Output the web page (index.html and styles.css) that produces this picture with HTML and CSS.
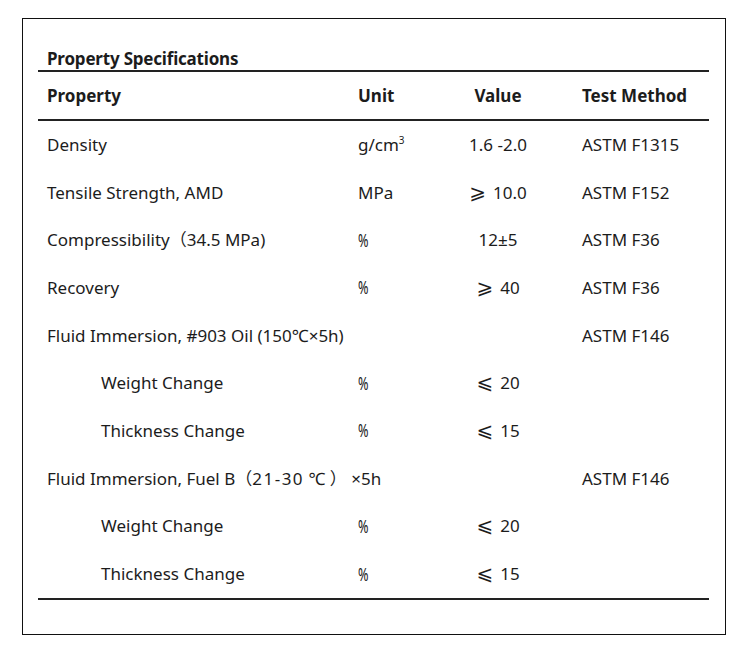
FILE: index.html
```html
<!DOCTYPE html>
<html lang="en">
<head>
<meta charset="utf-8">
<title>Property Specifications</title>
<link rel="stylesheet" href="styles.css">
</head>
<body>
<div class="frame">
  <div class="sheet">
    <h2 class="title">Property Specifications</h2>
    <div class="table">
      <div class="row head">
        <div class="c prop">Property</div>
        <div class="c unit">Unit</div>
        <div class="c val">Value</div>
        <div class="c meth">Test Method</div>
      </div>
      <div class="body">
        <div class="row">
          <div class="c prop">Density</div>
          <div class="c unit">g/cm<sup>3</sup></div>
          <div class="c val">1.6 -2.0</div>
          <div class="c meth">ASTM F1315</div>
        </div>
        <div class="row">
          <div class="c prop">Tensile Strength, AMD</div>
          <div class="c unit">MPa</div>
          <div class="c val"><span class="op">⩾</span>10.0</div>
          <div class="c meth">ASTM F152</div>
        </div>
        <div class="row">
          <div class="c prop">Compressibility（34.5 MPa)</div>
          <div class="c unit"><span class="pct">%</span></div>
          <div class="c val">12±5</div>
          <div class="c meth">ASTM F36</div>
        </div>
        <div class="row">
          <div class="c prop">Recovery</div>
          <div class="c unit"><span class="pct">%</span></div>
          <div class="c val"><span class="op">⩾</span>40</div>
          <div class="c meth">ASTM F36</div>
        </div>
        <div class="row">
          <div class="c prop wide">Fluid Immersion, #903 Oil (150℃×5h)</div>
          <div class="c val"></div>
          <div class="c meth">ASTM F146</div>
        </div>
        <div class="row">
          <div class="c prop sub">Weight Change</div>
          <div class="c unit"><span class="pct">%</span></div>
          <div class="c val"><span class="op">⩽</span>20</div>
          <div class="c meth"></div>
        </div>
        <div class="row">
          <div class="c prop sub">Thickness Change</div>
          <div class="c unit"><span class="pct">%</span></div>
          <div class="c val"><span class="op">⩽</span>15</div>
          <div class="c meth"></div>
        </div>
        <div class="row">
          <div class="c prop wide">Fluid Immersion, Fuel B（<span class="range">21-30</span> ℃ ） ×5h</div>
          <div class="c val"></div>
          <div class="c meth">ASTM F146</div>
        </div>
        <div class="row">
          <div class="c prop sub">Weight Change</div>
          <div class="c unit"><span class="pct">%</span></div>
          <div class="c val"><span class="op">⩽</span>20</div>
          <div class="c meth"></div>
        </div>
        <div class="row">
          <div class="c prop sub">Thickness Change</div>
          <div class="c unit"><span class="pct">%</span></div>
          <div class="c val"><span class="op">⩽</span>15</div>
          <div class="c meth"></div>
        </div>
      </div>
    </div>
  </div>
</div>
</body>
</html>
```

FILE: styles.css
```css
html, body {
  margin: 0;
  padding: 0;
  background: #ffffff;
}

body {
  font-family: "Noto Sans", "Noto Sans CJK SC", sans-serif;
  color: #1c1c1c;
  font-size: 17px;
}

.frame {
  box-sizing: border-box;
  margin: 18px 0 0 22px;
  width: 704px;
  height: 617px;
  border: 1px solid #111111;
}

.sheet {
  margin: 0 16px 0 15px;
  padding-top: 28px;
}

.title {
  margin: 0;
  padding: 0 0 0 9px;
  font-size: 17px;
  font-weight: 700;
  line-height: 23px;
  letter-spacing: -0.2px;
  border-bottom: 2px solid #222222;
}

.table {
  border-bottom: 2px solid #222222;
}

.row {
  display: grid;
  grid-template-columns: 311px 74px 150px 1fr;
  align-items: center;
  height: 47.7px;
}

.head {
  height: 47px;
  font-weight: 700;
  border-bottom: 2px solid #222222;
}

.c {
  padding-left: 9px;
  white-space: nowrap;
  line-height: 24px;
}

.prop.wide {
  grid-column: 1 / 3;
}

.prop.sub {
  padding-left: 63px;
}

.val {
  padding-left: 0;
  text-align: center;
}

.op {
  font-family: "DejaVu Sans", sans-serif;
  font-size: 20px;
  line-height: 0;
  margin-right: 7px;
}

.range {
  letter-spacing: 1.5px;
}

.pct {
  display: inline-block;
  font-size: 18px;
  transform: scaleX(0.7);
  transform-origin: left center;
}

sup {
  font-size: 10px;
  vertical-align: 7px;
  line-height: 0;
}
```
